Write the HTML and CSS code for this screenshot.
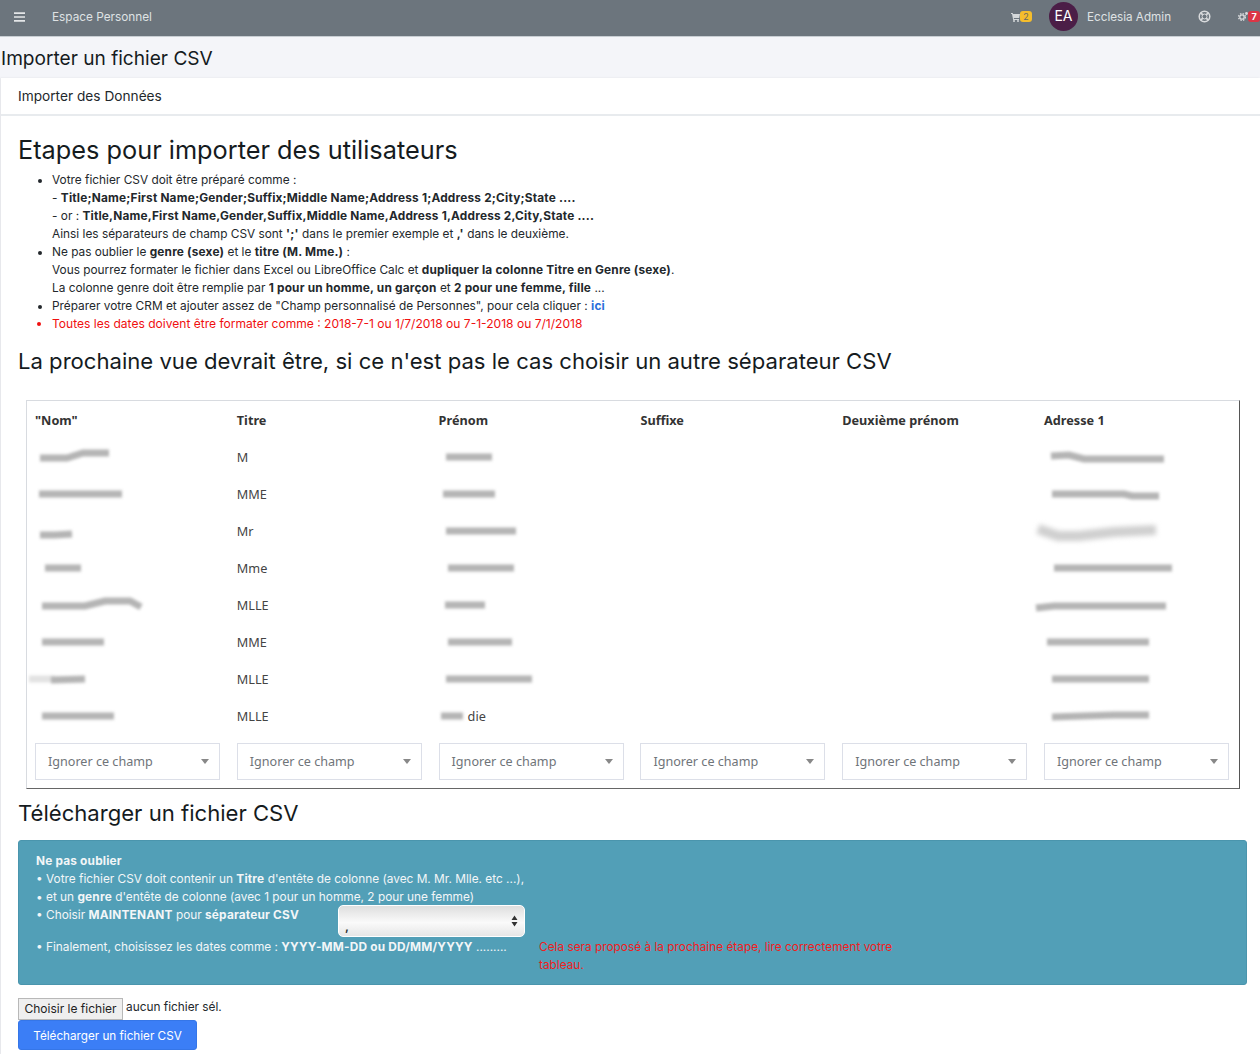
FILE: index.html
```html
<!DOCTYPE html>
<html lang="fr">
<head>
    <meta charset="UTF-8">
    <title>Importer un fichier CSV</title>
    <link rel="stylesheet" href="styles.css">
</head>
<body>
    <nav class="navbar">
        <svg class="nav-burger" width="11" height="10" viewBox="0 0 11 10"><path d="M0 1.2h11M0 5h11M0 8.8h11" stroke="#e4e6e8" stroke-width="1.7"/></svg>
        <span class="nav-brand">Espace Personnel</span>
        <div class="nav-right">
            <span class="nav-cart">
                <svg width="9" height="10" viewBox="0 0 9 10"><path d="M0 1h1.800l.2 1H9L8.200 6H2.800l.2 1h5v1H2.200L1 2H0z" fill="#d5d8da"/><circle cx="3" cy="9" r="1" fill="#d5d8da"/><circle cx="7" cy="9" r="1" fill="#d5d8da"/></svg>
                <span class="badge badge-yellow">2</span>
            </span>
            <span class="avatar">EA</span>
            <span class="nav-user">Ecclesia Admin</span>
            <svg class="nav-ring" width="13" height="13" viewBox="0 0 13 13"><circle cx="6.500" cy="6.500" r="5.300" fill="none" stroke="#d8dadc" stroke-width="1.500"/><circle cx="6.500" cy="6.500" r="2.500" fill="none" stroke="#d8dadc" stroke-width="1"/><path d="M2.800 2.800l2 2M10.200 2.800l-2 2M2.800 10.200l2-2M10.200 10.200l-2-2" stroke="#d8dadc" stroke-width="1.800"/></svg>
            <span class="nav-cogs">
                <svg width="10" height="11" viewBox="0 0 10 11"><circle cx="4" cy="6" r="2.200" fill="none" stroke="#d8dadc" stroke-width="1.300"/><circle cx="4" cy="6" r="3.400" fill="none" stroke="#d8dadc" stroke-width="1.300" stroke-dasharray="1.500 1.200"/><circle cx="8.500" cy="2.500" r="1.400" fill="#d8dadc"/></svg>
                <span class="badge badge-red">7</span>
            </span>
        </div>
    </nav>

    <div class="page-title">Importer un fichier CSV</div>

    <div class="card">
        <div class="card-header">Importer des Données</div>
        <div class="card-body">
            <h2 class="title-big">Etapes pour importer des utilisateurs</h2>
            <ul class="steps">
                <li>Votre fichier CSV doit être préparé comme :<br>
                    - <b>Title;Name;First Name;Gender;Suffix;Middle Name;Address 1;Address 2;City;State ....</b><br>
                    - or : <b>Title,Name,First Name,Gender,Suffix,Middle Name,Address 1,Address 2,City,State ....</b><br>
                    Ainsi les séparateurs de champ CSV sont <b>';'</b> dans le premier exemple et <b>,'</b> dans le deuxième.</li>
                <li>Ne pas oublier le <b>genre (sexe)</b> et le <b>titre (M. Mme.)</b> :<br>
                    Vous pourrez formater le fichier dans Excel ou LibreOffice Calc et <b>dupliquer la colonne Titre en Genre (sexe)</b>.<br>
                    La colonne genre doit être remplie par <b>1 pour un homme, un garçon</b> et <b>2 pour une femme, fille</b> ...</li>
                <li>Préparer votre CRM et ajouter assez de "Champ personnalisé de Personnes", pour cela cliquer : <a href="#"><b>ici</b></a></li>
                <li class="danger">Toutes les dates doivent être formater comme : 2018-7-1 ou 1/7/2018 ou 7-1-2018 ou 7/1/2018</li>
            </ul>

            <h3 class="title-mid">La prochaine vue devrait être, si ce n'est pas le cas choisir un autre séparateur CSV</h3>

            <div class="preview">
                <div class="preview-grid">
                    <div class="th">"Nom"</div><div class="th">Titre</div><div class="th">Prénom</div><div class="th">Suffixe</div><div class="th">Deuxième prénom</div><div class="th">Adresse 1</div>

                    <div class="td"><svg class="sm"><path d="M5 19H32L48 14H74"/></svg></div><div class="td">M</div><div class="td"><svg class="sm"><path d="M7 18H53"/></svg></div><div class="td"></div><div class="td"></div><div class="td"><svg class="sm"><path d="M7 17L25 16L40 20H120"/></svg></div>

                    <div class="td"><svg class="sm"><path d="M4 18H87"/></svg></div><div class="td">MME</div><div class="td"><svg class="sm"><path d="M4 18H56"/></svg></div><div class="td"></div><div class="td"></div><div class="td"><svg class="sm"><path d="M8 18H80L88 20H115"/></svg></div>

                    <div class="td"><svg class="sm"><path d="M5 22H20L37 21"/></svg></div><div class="td">Mr</div><div class="td"><svg class="sm"><path d="M7 18H77"/></svg></div><div class="td"></div><div class="td"></div><div class="td"><svg class="sm sm-wide"><path d="M-6 16L14 23H35L70 19L112 17"/></svg></div>

                    <div class="td"><svg class="sm"><path d="M10 18H46"/></svg></div><div class="td">Mme</div><div class="td"><svg class="sm"><path d="M9 18H75"/></svg></div><div class="td"></div><div class="td"></div><div class="td"><svg class="sm"><path d="M10 18H128"/></svg></div>

                    <div class="td"><svg class="sm"><path d="M7 19H50L70 14H95L106 20"/></svg></div><div class="td">MLLE</div><div class="td"><svg class="sm"><path d="M6 18H46"/></svg></div><div class="td"></div><div class="td"></div><div class="td"><svg class="sm"><path d="M-8 21L10 19H122"/></svg></div>

                    <div class="td"><svg class="sm"><path d="M7 18H69"/></svg></div><div class="td">MME</div><div class="td"><svg class="sm"><path d="M9 18H73"/></svg></div><div class="td"></div><div class="td"></div><div class="td"><svg class="sm"><path d="M3 18H105"/></svg></div>

                    <div class="td"><svg class="sm"><path class="sm-light" d="M-6 18H20"/><path d="M16 19L50 18"/></svg></div><div class="td">MLLE</div><div class="td"><svg class="sm"><path d="M7 18H93"/></svg></div><div class="td"></div><div class="td"></div><div class="td"><svg class="sm"><path d="M8 18H105"/></svg></div>

                    <div class="td"><svg class="sm"><path d="M7 18H79"/></svg></div><div class="td">MLLE</div><div class="td td-name"><svg class="sm sm-short"><path d="M2 18H24"/></svg>die</div><div class="td"></div><div class="td"></div><div class="td"><svg class="sm"><path d="M8 19L70 17H105"/></svg></div>

                    <div class="map-select"><span>Ignorer ce champ</span></div><div class="map-select"><span>Ignorer ce champ</span></div><div class="map-select"><span>Ignorer ce champ</span></div><div class="map-select"><span>Ignorer ce champ</span></div><div class="map-select"><span>Ignorer ce champ</span></div><div class="map-select"><span>Ignorer ce champ</span></div>
                </div>
            </div>

            <h3 class="title-mid title-upload">Télécharger un fichier CSV</h3>

            <div class="alert">
                <div class="alert-line"><b>Ne pas oublier</b></div>
                <div class="alert-line">• Votre fichier CSV doit contenir un <b>Titre</b> d'entête de colonne (avec M. Mr. Mlle. etc ...),</div>
                <div class="alert-line">• et un <b>genre</b> d'entête de colonne (avec 1 pour un homme, 2 pour une femme)</div>
                <div class="alert-row">
                    <div class="alert-label">• Choisir <b>MAINTENANT</b> pour <b>séparateur CSV</b></div>
                    <div class="sep-select">
                        <span>,</span>
                        <svg width="7" height="12" viewBox="0 0 7 12"><path d="M3.500 0.500L6.500 5H0.500zM3.500 11.500L0.500 7H6.500z" fill="#333"/></svg>
                    </div>
                </div>
                <div class="alert-dates">
                    <div class="alert-date-text">• Finalement, choisissez les dates comme : <b>YYYY-MM-DD ou DD/MM/YYYY</b> .........</div>
                    <div class="alert-red">Cela sera proposé à la prochaine étape, lire correctement votre tableau.</div>
                </div>
            </div>

            <div class="file-row">
                <button class="file-btn">Choisir le fichier</button>
                <span class="file-name">aucun fichier sél.</span>
            </div>
            <button class="upload-btn">Télécharger un fichier CSV</button>
        </div>
    </div>
</body>
</html>
```

FILE: styles.css
```css
* {
    box-sizing: border-box;
}
html, body {
    height: 1054px;
    overflow: hidden;
}
body {
    margin: 0;
    font-family: Inter, "Liberation Sans", sans-serif;
    font-size: 11.850px;
    line-height: 18px;
    color: #23282c;
    background: #f4f5f9;
}
b {
    letter-spacing: 0.190px;
}
.navbar {
    display: flex;
    align-items: center;
    height: 37px;
    padding: 0 0 3px 14px;
    background: #6c757d;
    border-bottom: 1px solid #c8ced3;
    color: #dfe2e4;
}
.nav-burger {
    margin-right: 27px;
}
.nav-brand {
    font-size: 11.800px;
}
.nav-right {
    display: flex;
    align-items: center;
    margin-left: auto;
}
.nav-cart, .nav-cogs {
    display: flex;
    align-items: center;
}
.badge {
    display: inline-block;
    width: 12px;
    height: 11px;
    font-size: 9px;
    line-height: 11px;
    border-radius: 3px;
    text-align: center;
}
.badge-yellow {
    background: #f5bd2c;
    color: #666;
}
.badge-red {
    background: #dc3545;
    color: #fff;
    font-weight: 700;
}
.avatar {
    width: 29px;
    height: 29px;
    margin-left: 17px;
    border-radius: 50%;
    background: #4b1e47;
    color: #fff;
    font-size: 14px;
    line-height: 28px;
    text-align: center;
}
.nav-user {
    width: 84px;
    margin-left: 9px;
    font-size: 11.700px;
    white-space: nowrap;
}
.nav-ring {
    margin-left: 27px;
}
.nav-cogs {
    margin-left: 27px;
}
.page-title {
    height: 41px;
    padding-left: 1px;
    font-size: 19.100px;
    line-height: 43px;
    color: #151b1e;
}
.card {
    margin-left: 1px;
    height: 977px;
    background: #fff;
    box-shadow: -1px 0 2px rgba(0, 0, 0, 0.08);
}
.card-header {
    height: 38px;
    padding-left: 17px;
    border-bottom: 2px solid #e8ebee;
    font-size: 13.700px;
    line-height: 37px;
}
.card-body {
    padding: 0 13px 0 17px;
}
.title-big {
    margin: 17px 0 0;
    font-size: 25.300px;
    font-weight: 400;
    line-height: 34px;
    color: #151b1e;
}
.steps {
    margin: 4px 0 0;
    padding-left: 34px;
}
.steps a {
    color: #2a6fdb;
    text-decoration: none;
}
.danger {
    font-size: 12.050px;
    color: #f01010;
}
.title-mid {
    margin: 13px 0 0;
    font-size: 22.100px;
    font-weight: 400;
    line-height: 30px;
    color: #151b1e;
}
.preview {
    margin: 24px 0 0 8px;
    width: 1214px;
    height: 389px;
    border: 1px solid #d8dbe0;
    border-right-color: #555;
    border-bottom-color: #666;
    font-family: "Noto Sans", sans-serif;
    font-size: 12.700px;
    color: #444;
}
.preview-grid {
    display: grid;
    grid-template-columns: repeat(6, 201.800px);
    grid-template-rows: 38px repeat(8, 37px) 37px;
    padding-left: 8px;
}
.th {
    font-weight: 700;
    line-height: 38px;
    color: #333;
}
.td {
    line-height: 37px;
}
.td-name {
    display: flex;
    color: #444;
}
.sm {
    display: block;
    width: 170px;
    height: 37px;
    overflow: visible;
    filter: blur(1.600px);
}
.sm-short {
    width: 29px;
}
.sm path {
    fill: none;
    stroke: #b4b4b4;
    stroke-width: 7;
}
.sm path.sm-light {
    stroke: #e2e2e2;
}
.sm-wide {
    filter: blur(2.500px);
}
.sm-wide path {
    stroke: #cfcfcf;
    stroke-width: 10;
}
.map-select {
    display: flex;
    align-items: center;
    justify-content: space-between;
    width: 185px;
    height: 37px;
    margin-top: 8px;
    padding: 0 10px 0 12px;
    border: 1px solid #dcdfe8;
    color: #6f7479;
    font-size: 12.600px;
}
.map-select::after {
    content: "";
    border-left: 4px solid transparent;
    border-right: 4px solid transparent;
    border-top: 5px solid #888;
}
.title-upload {
    margin-top: 9px;
}
.alert {
    margin-top: 12px;
    width: 1229px;
    height: 145px;
    padding: 11px 17px;
    border-radius: 3px;
    background: #529fb7;
    border: 1px solid #4a95ad;
    color: #f2f6f8;
}
.alert-row {
    display: flex;
}
.alert-label {
    width: 302px;
}
.sep-select {
    display: flex;
    align-items: center;
    justify-content: space-between;
    width: 187px;
    height: 32px;
    margin-top: -1px;
    padding: 0 6px;
    border: 1px solid #fff;
    border-radius: 5px;
    background: linear-gradient(#dedede, #fafafa 55%, #e6e6e6);
    color: #333;
}
.sep-select span {
    margin-top: 12px;
    font-weight: 700;
}
.alert-dates {
    display: flex;
    margin-top: 1px;
}
.alert-date-text {
    width: 503px;
}
.alert-red {
    width: 365px;
    color: #f0201e;
}
.file-row {
    display: flex;
    align-items: flex-start;
    margin-top: 13px;
}
.file-btn {
    width: 105px;
    height: 22px;
    padding: 0 0 1px;
    border: 1px solid #b8b8b8;
    background: #efefef;
    color: #222;
    font-family: Inter, sans-serif;
    font-size: 12px;
}
.file-name {
    margin-left: 3px;
    line-height: 18px;
}
.upload-btn {
    display: block;
    width: 179px;
    height: 30px;
    padding: 1px 0 0;
    border: 1px solid #3576e8;
    border-radius: 3px;
    background: #3b7ef6;
    color: #fff;
    font-family: Inter, sans-serif;
    font-size: 11.700px;
}
```
